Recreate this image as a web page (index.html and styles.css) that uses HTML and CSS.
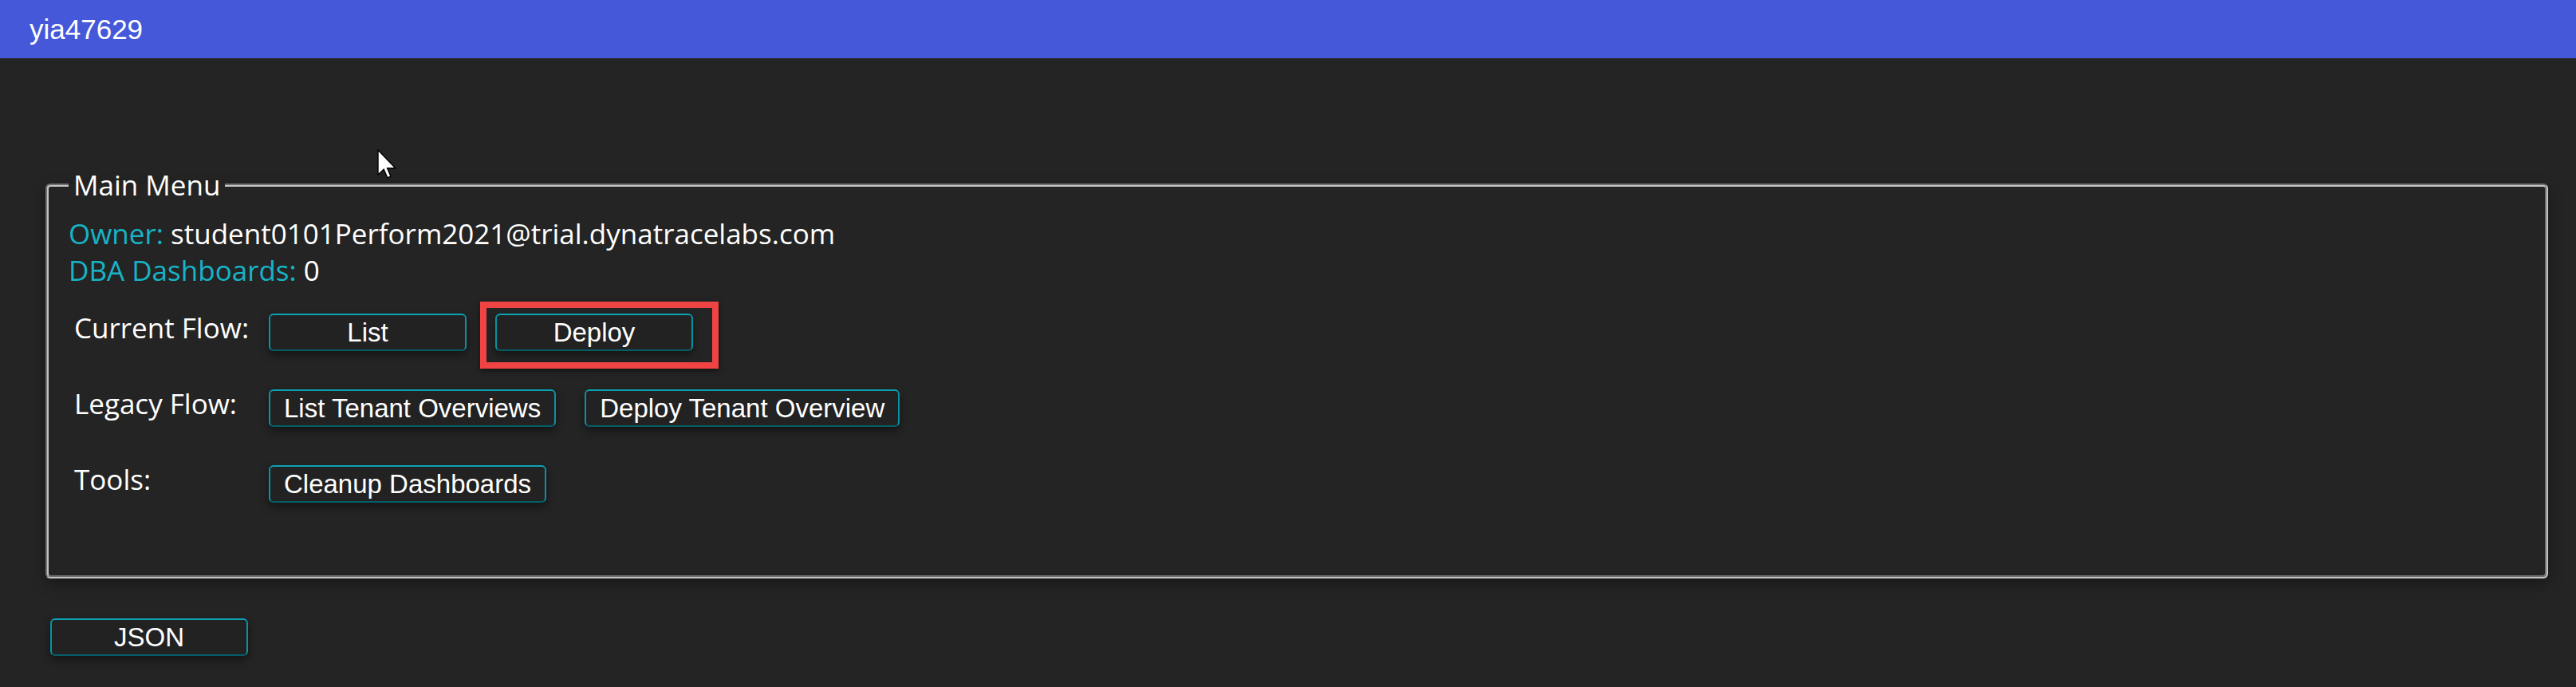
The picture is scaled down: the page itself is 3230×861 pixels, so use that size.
FILE: index.html
```html
<!DOCTYPE html>
<html lang="en">
<head>
<meta charset="utf-8">
<title>yia47629</title>
<link rel="stylesheet" href="styles.css">
</head>
<body>
<header class="topbar">yia47629</header>
<main class="page">
  <fieldset class="menu">
    <legend class="menu-title">Main Menu</legend>
    <div class="info">
      <div class="info-line"><span class="info-key">Owner:</span> <span class="info-val">student0101Perform2021@trial.dynatracelabs.com</span></div>
      <div class="info-line"><span class="info-key">DBA Dashboards:</span> <span class="info-val">0</span></div>
    </div>
    <div class="rows">
      <div class="row">
        <div class="row-label">Current Flow:</div>
        <div class="row-buttons">
          <button class="btn">List</button>
          <span class="highlight-wrap">
            <button class="btn">Deploy</button>
            <span class="highlight"></span>
          </span>
        </div>
      </div>
      <div class="row">
        <div class="row-label">Legacy Flow:</div>
        <div class="row-buttons">
          <button class="btn">List Tenant Overviews</button>
          <button class="btn">Deploy Tenant Overview</button>
        </div>
      </div>
      <div class="row">
        <div class="row-label">Tools:</div>
        <div class="row-buttons">
          <button class="btn">Cleanup Dashboards</button>
        </div>
      </div>
    </div>
  </fieldset>
  <div class="footer-actions">
    <button class="btn">JSON</button>
  </div>
</main>
<svg class="cursor" width="26" height="38" viewBox="0 0 13 19" aria-hidden="true">
  <path d="M0.5 0.5 L0.5 16 L4.1 12.6 L6.4 17.9 L8.5 17 L6.3 11.9 L11.4 11.9 Z" fill="#ffffff" stroke="#000000" stroke-width="0.7" stroke-linejoin="miter"/>
</svg>
</body>
</html>
```

FILE: styles.css
```css
html, body {
  margin: 0;
  padding: 0;
  background: #242424;
}

body {
  position: relative;
  min-height: 861px;
  color: #ffffff;
  font-family: "Open Sans", "Noto Sans", sans-serif;
}

.topbar {
  height: 73px;
  line-height: 73px;
  background: #4558d9;
  color: #ffffff;
  font-family: "Liberation Sans", Arial, sans-serif;
  font-size: 35px;
  padding-left: 37px;
}

.page {
  padding: 136px 35px 0 57px;
}

.menu {
  margin: 0;
  min-width: 0;
  border: 4px groove #c4c4c4;
  border-radius: 6px;
  padding: 15px 25px 91px 25px;
  box-shadow: 0 6px 18px rgba(0, 0, 0, 0.35);
}

.menu-title {
  font-size: 35px;
  line-height: 46px;
  padding: 0 6px;
  color: #ffffff;
}

.info-line {
  font-size: 35px;
  line-height: 46px;
  white-space: nowrap;
}

.info-key {
  color: #16b4c6;
}

.info-val {
  color: #ffffff;
}

.rows {
  margin-top: 31px;
  display: flex;
  flex-direction: column;
  gap: 48px;
}

.row {
  display: flex;
  align-items: flex-start;
}

.row-label {
  width: 244px;
  padding-left: 7px;
  font-size: 35px;
  line-height: 36px;
  color: #ffffff;
}

.row-buttons {
  display: flex;
  gap: 36px;
  align-items: flex-start;
}

.btn {
  min-width: 248px;
  margin: 0;
  padding: 4px 17px;
  font-family: "Liberation Sans", Arial, sans-serif;
  font-size: 33px;
  line-height: 35px;
  color: #ffffff;
  background: #222222;
  border: 2px solid #0893a3;
  border-top-color: #0aa3b4;
  border-bottom-color: #045e68;
  border-radius: 6px;
  box-shadow: 0 5px 12px rgba(0, 0, 0, 0.45);
  white-space: nowrap;
}

.highlight-wrap {
  position: relative;
  display: inline-block;
}

.highlight {
  position: absolute;
  left: -19px;
  top: -15px;
  width: 283px;
  height: 68px;
  border: 8px solid #f04444;
  box-shadow: 0 3px 7px rgba(0, 0, 0, 0.5);
  pointer-events: none;
}

.footer-actions {
  margin-top: 50px;
  padding-left: 6px;
}

.cursor {
  position: absolute;
  left: 473px;
  top: 187px;
}
```
